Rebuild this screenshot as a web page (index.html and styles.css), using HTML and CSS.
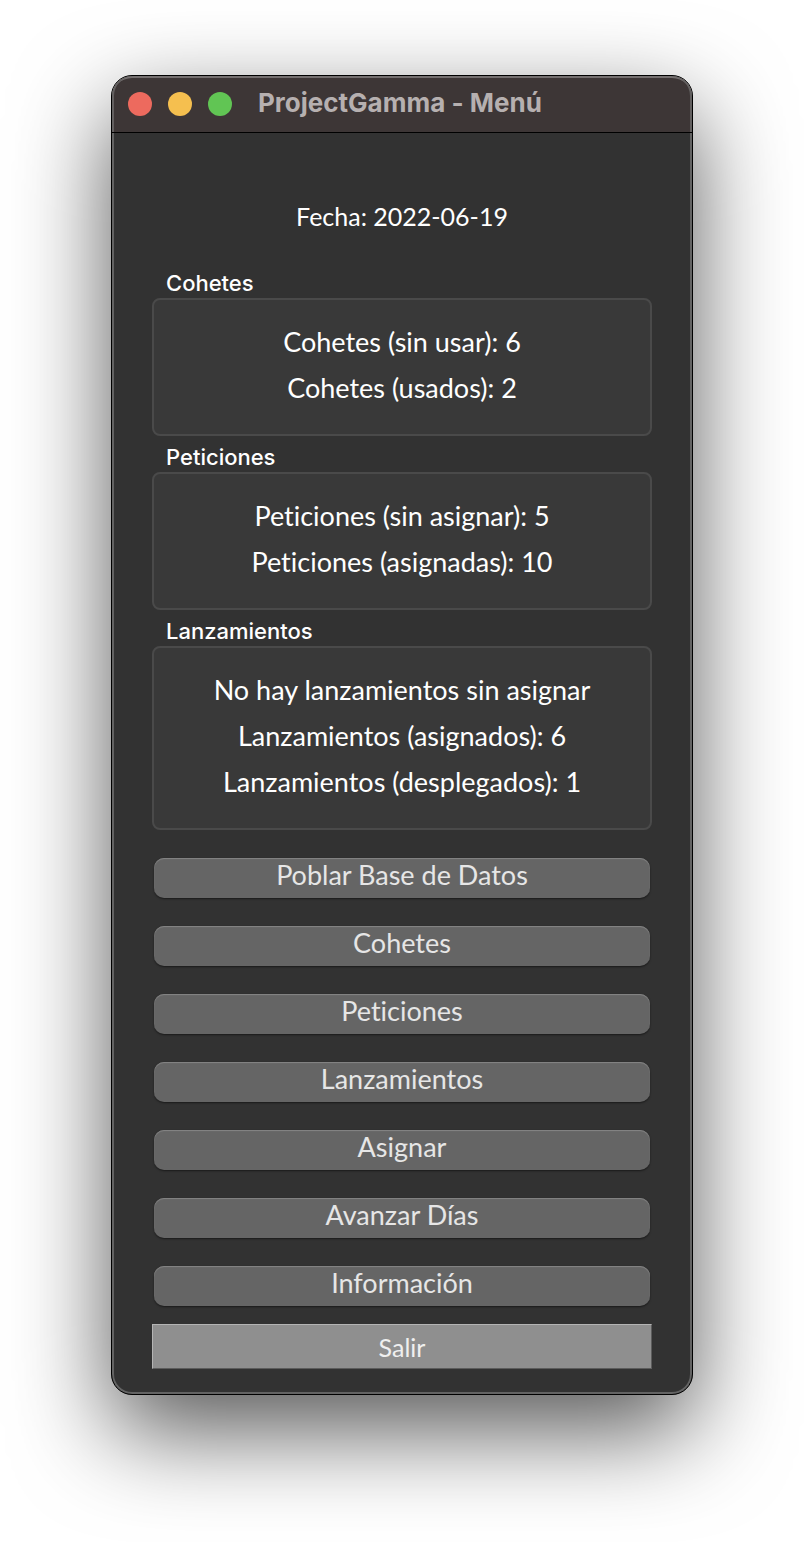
FILE: index.html
```html
<!DOCTYPE html>
<html lang="es">
<head>
<meta charset="utf-8">
<meta name="viewport" content="width=device-width, initial-scale=1">
<title>ProjectGamma - Menú</title>
<link rel="stylesheet" href="styles.css">
</head>
<body>
<div class="window">
  <header class="titlebar">
    <div class="controls">
      <button class="control close" type="button" aria-label="Cerrar"></button>
      <button class="control minimize" type="button" aria-label="Minimizar"></button>
      <button class="control maximize" type="button" aria-label="Ampliar"></button>
    </div>
    <h1 class="title">ProjectGamma - Menú</h1>
  </header>
  <main class="content">
    <p class="date">Fecha: 2022-06-19</p>
    <section class="group">
      <h2 class="group-label">Cohetes</h2>
      <div class="group-box">
        <p class="row">Cohetes (sin usar): 6</p>
        <p class="row">Cohetes (usados): 2</p>
      </div>
    </section>
    <section class="group">
      <h2 class="group-label">Peticiones</h2>
      <div class="group-box">
        <p class="row">Peticiones (sin asignar): 5</p>
        <p class="row">Peticiones (asignadas): 10</p>
      </div>
    </section>
    <section class="group">
      <h2 class="group-label">Lanzamientos</h2>
      <div class="group-box">
        <p class="row">No hay lanzamientos sin asignar</p>
        <p class="row">Lanzamientos (asignados): 6</p>
        <p class="row">Lanzamientos (desplegados): 1</p>
      </div>
    </section>
    <nav class="actions">
      <button class="action" type="button">Poblar Base de Datos</button>
      <button class="action" type="button">Cohetes</button>
      <button class="action" type="button">Peticiones</button>
      <button class="action" type="button">Lanzamientos</button>
      <button class="action" type="button">Asignar</button>
      <button class="action" type="button">Avanzar Días</button>
      <button class="action" type="button">Información</button>
    </nav>
    <button class="exit" type="button">Salir</button>
  </main>
</div>
</body>
</html>
```
FILE: styles.css
```css
* {
  box-sizing: border-box;
}

body {
  margin: 0;
  padding: 75px 111px 147px;
  background: #fff;
  color: #fff;
  font-family: "Century Gothic", Lato, sans-serif;
  font-size: 25px;
  font-variant-ligatures: none;
  line-height: 30px;
}

h1,
h2,
p {
  margin: 0;
}

.window {
  display: flex;
  flex-direction: column;
  border: 1px solid #000;
  border-radius: 21px;
  background: #323232;
  box-shadow:
    inset 0 0 0 2px #636363,
    0 36px 96px rgba(0, 0, 0, 0.66);
}

.titlebar {
  display: flex;
  align-items: center;
  gap: 26px;
  height: 57px;
  padding: 0 16px;
  border-bottom: 1px solid #000;
  border-radius: 20px 20px 0 0;
  background: #3d3636;
  box-shadow:
    inset 2px 0 #636060,
    inset -2px 0 #636060,
    inset 0 2px #757070;
}

.controls {
  display: flex;
  gap: 16px;
}

.control {
  width: 24px;
  height: 24px;
  padding: 0;
  border: 0;
  border-radius: 50%;
}

.close {
  background: #ed6a5e;
}

.minimize {
  background: #f5bf4f;
}

.maximize {
  background: #61c554;
}

.title {
  padding-bottom: 2px;
  color: #b6b0b0;
  font-family: Inter, sans-serif;
  font-size: 26px;
  font-weight: 700;
}

.content {
  display: flex;
  flex-direction: column;
  padding: 68px 40px 25px;
}

.date {
  padding-bottom: 31px;
  text-align: center;
}

.group {
  padding-top: 6px;
}

.group-label {
  padding-left: 14px;
  font-family: Inter, sans-serif;
  font-size: 22px;
  font-weight: 500;
}

.group-box {
  padding: 19px 21px 23px;
  border: 2px solid #4a4a4a;
  border-radius: 8px;
  background: #393939;
}

.row {
  font-size: 27px;
  line-height: 46px;
  text-align: center;
}

.actions {
  display: flex;
  flex-direction: column;
  gap: 28px;
  padding: 28px 2px 18px;
}

.action {
  height: 40px;
  padding: 0 12px 6px;
  border: 0;
  border-radius: 10px;
  background: #656565;
  box-shadow:
    inset 0 1px 1px #858585,
    0 1px 2px rgba(0, 0, 0, 0.5);
  color: #e6e6e6;
  font: inherit;
  font-size: 27px;
}

.exit {
  height: 45px;
  padding: 0 12px;
  border: 1px solid;
  border-color: #b4b4b4 #5c5c5c #5c5c5c #b4b4b4;
  background: #8f8f8f;
  color: #efefef;
  font: inherit;
}
```
